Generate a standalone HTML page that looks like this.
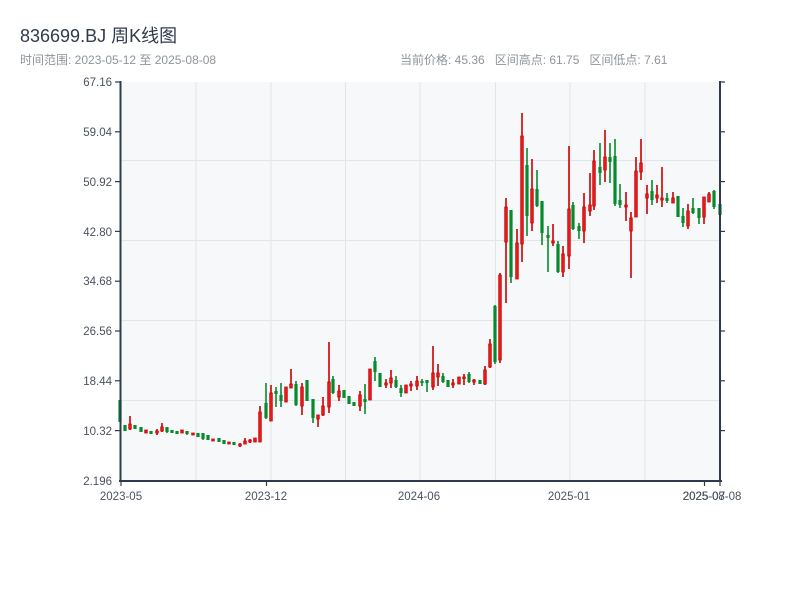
<!DOCTYPE html>
<html><head><meta charset="utf-8"><style>
html,body{margin:0;padding:0;background:#fff;width:800px;height:600px;overflow:hidden}
body{font-family:"Liberation Sans","Noto Sans CJK SC",sans-serif;position:relative}
.t{position:absolute;left:20px;top:22px;font-size:18px;color:#2f3b4c;white-space:nowrap}
.s{position:absolute;left:20px;top:51px;font-size:12px;color:#8e949c;white-space:nowrap}
.r{position:absolute;left:400px;top:51px;font-size:12px;color:#8e949c;white-space:nowrap;word-spacing:0}
svg{position:absolute;left:0;top:0}
svg text{font-family:"Liberation Sans",sans-serif;font-size:11.5px;fill:#4a5260}
</style></head><body>
<div class="t">836699.BJ 周K线图</div>
<div class="s">时间范围: 2023-05-12 至 2025-08-08</div>
<div class="r">当前价格: 45.36&nbsp;&nbsp;&nbsp;区间高点: 61.75&nbsp;&nbsp;&nbsp;区间低点: 7.61</div>
<svg id="c" width="800" height="600" xmlns="http://www.w3.org/2000/svg">
<rect x="121" y="82" width="599" height="399" fill="#f6f8fa"/>
<g stroke="#e1e4e9" stroke-width="1">
<line x1="121" x2="720" y1="160.5" y2="160.5"/><line x1="121" x2="720" y1="240.5" y2="240.5"/>
<line x1="121" x2="720" y1="320.5" y2="320.5"/><line x1="121" x2="720" y1="400.5" y2="400.5"/>
<line x1="196" x2="196" y1="82" y2="481"/><line x1="271" x2="271" y1="82" y2="481"/>
<line x1="345.5" x2="345.5" y1="82" y2="481"/><line x1="420" x2="420" y1="82" y2="481"/>
<line x1="495.5" x2="495.5" y1="82" y2="481"/><line x1="570" x2="570" y1="82" y2="481"/>
<line x1="645" x2="645" y1="82" y2="481"/>
</g>
<g id="k"></g>
<g stroke="#2e3b4e" stroke-width="2">
<line x1="120.5" x2="120.5" y1="81" y2="482"/>
<line x1="720" x2="720" y1="81" y2="482"/>
<line x1="119" x2="722" y1="481" y2="481"/>
</g>
<g stroke="#2e3b4e" stroke-width="1.2">
<line x1="115" x2="120" y1="82" y2="82"/><line x1="115" x2="120" y1="131.8" y2="131.8"/>
<line x1="115" x2="120" y1="181.6" y2="181.6"/><line x1="115" x2="120" y1="231.4" y2="231.4"/>
<line x1="115" x2="120" y1="281.2" y2="281.2"/><line x1="115" x2="120" y1="331" y2="331"/>
<line x1="115" x2="120" y1="380.8" y2="380.8"/><line x1="115" x2="120" y1="430.6" y2="430.6"/>
<line x1="720" x2="725" y1="82" y2="82"/><line x1="720" x2="725" y1="131.8" y2="131.8"/>
<line x1="720" x2="725" y1="181.6" y2="181.6"/><line x1="720" x2="725" y1="231.4" y2="231.4"/>
<line x1="720" x2="725" y1="281.2" y2="281.2"/><line x1="720" x2="725" y1="331" y2="331"/>
<line x1="720" x2="725" y1="380.8" y2="380.8"/><line x1="720" x2="725" y1="430.6" y2="430.6"/>
<line x1="121" x2="121" y1="481" y2="486"/><line x1="266.5" x2="266.5" y1="481" y2="486"/>
<line x1="704.5" x2="704.5" y1="481" y2="486"/><line x1="720" x2="720" y1="481" y2="486"/>
</g>
<g text-anchor="end">
<text x="112" y="86">67.16</text><text x="112" y="136">59.04</text>
<text x="112" y="186">50.92</text><text x="112" y="236">42.80</text>
<text x="112" y="285">34.68</text><text x="112" y="335">26.56</text>
<text x="112" y="385">18.44</text><text x="112" y="435">10.32</text>
<text x="112" y="485">2.196</text>
</g>
<g text-anchor="middle">
<text x="121" y="500">2023-05</text><text x="266" y="500">2023-12</text>
<text x="419" y="500">2024-06</text><text x="569" y="500">2025-01</text>
<text x="704" y="500">2025-07</text><text x="712" y="500">2025-08-08</text>
</g>
</svg>
<script>
var D=[
[120,'g',400,400,422,422],[125,'g',425,425,431,431],[130,'r',416,424,429,430],[135,'g',425,425,429,429],
[141,'g',427,427,432,432],[146,'r',430,430,433,433],[151,'g',431,431,434,434],[157,'r',429,431,433,435],
[162,'r',423,427,431,432],[167,'g',427,427,432,433],[172,'g',430,430,433,433],[177,'g',431,431,434,434],
[182,'r',430,430,433,433],[187,'g',431,431,434,435],[193,'r',433,433,435,435],[198,'g',433,433,437,437],
[203,'g',433,433,439,440],[208,'g',435,435,440,440],[213,'r',439,439,441,441],[219,'g',438,438,442,442],
[224,'g',440,440,444,444],[229,'r',442,442,444,444],[234,'g',442,442,445,445],[240,'r',443,444,446,447],
[245,'r',438,441,444,444],[250,'r',439,440,442,443],[255,'r',438,438,442,442],[260,'r',406,412,442,442],
[266,'g',383,403,418,419],[271,'r',385,393,421,421],[276,'g',387,391,394,407],[281,'g',383,395,401,407],
[286,'r',387,387,402,402],[291,'r',369,384,388,388],[296,'g',381,384,405,406],[302,'r',383,387,406,415],
[307,'g',380,380,401,401],[313,'g',399,399,418,423],[318,'r',415,415,419,427],[323,'r',397,406,415,416],
[329,'r',342,382,407,413],[333,'g',376,379,393,394],[339,'r',385,391,397,401],[344,'g',390,390,398,398],
[349,'g',396,396,404,404],[354,'g',402,402,406,406],[360,'r',391,395,406,411],[365,'g',384,399,402,414],
[370,'r',369,369,400,400],[375,'g',357,361,372,381],[380,'g',373,373,387,387],[386,'r',379,383,385,388],
[391,'r',370,378,383,388],[396,'g',376,380,387,388],[401,'g',385,388,393,397],[406,'r',385,385,393,393],
[411,'r',381,384,386,391],[417,'r',376,381,386,390],[422,'g',379,381,383,386],[427,'g',380,380,383,392],
[433,'r',346,373,387,390],[438,'r',364,373,377,386],[443,'g',373,376,382,383],[448,'g',380,380,387,387],
[453,'r',379,383,385,388],[459,'r',377,377,384,384],[464,'r',374,377,378,385],[469,'g',372,374,382,383],
[474,'r',379,380,382,385],[480,'g',380,380,384,384],[485,'r',366,370,384,385],[490,'r',339,344,367,368],
[495,'g',305,306,362,364],[500,'r',273,275,360,363],[506,'r',198,207,242,303],[511,'g',210,210,277,283],
[517,'r',229,243,279,279],[522,'r',113,136,244,262],[527,'g',148,165,216,236],[532,'r',159,189,223,231],
[537,'g',170,189,206,207],[542,'g',201,201,233,245],[548,'g',226,235,238,272],[553,'r',224,241,243,246],
[558,'g',241,244,272,273],[563,'r',246,254,272,277],[569,'r',146,209,256,269],[573,'g',202,205,229,230],
[579,'g',223,226,231,239],[584,'r',193,207,231,243],[590,'r',173,205,211,216],[594,'r',150,161,206,210],
[600,'g',143,167,173,185],[605,'r',130,157,170,182],[610,'g',143,157,162,183],[615,'g',139,156,204,206],
[620,'g',184,200,205,208],[626,'r',192,205,207,221],[631,'r',212,218,231,278],[636,'r',157,171,217,217],
[641,'r',139,163,172,180],[647,'r',185,194,198,214],[652,'g',180,191,200,205],[657,'r',185,195,198,203],
[662,'r',167,198,200,207],[667,'g',193,198,201,203],[673,'r',192,198,203,203],[678,'g',196,196,217,217],
[683,'g',208,216,223,227],[688,'r',204,211,226,229],[693,'g',198,208,213,214],[699,'g',208,208,218,224],
[704,'r',197,197,217,224],[709,'r',192,194,202,202],[714,'g',190,191,207,209],[720,'g',204,204,215,215]];
var h='';
D.forEach(function(d){var x=d[0],c=d[1]=='r'?'#cc0000':'#078a2e';
h+='<rect x="'+(x-0.8)+'" y="'+d[2]+'" width="1.6" height="'+Math.max(1,d[5]-d[2])+'" fill="'+c+'"/>';
var bh=Math.max(1.5,d[4]-d[3]);
if(d[1]=='r')h+='<rect x="'+(x-1.3)+'" y="'+d[3]+'" width="2.6" height="'+bh+'" fill="#e81c1c" stroke="#cc0000" stroke-width="0.8"/>';
else h+='<rect x="'+(x-1.6)+'" y="'+d[3]+'" width="3.2" height="'+bh+'" fill="#078a2e"/>';});
document.getElementById('k').innerHTML=h;
</script>
</body></html>
